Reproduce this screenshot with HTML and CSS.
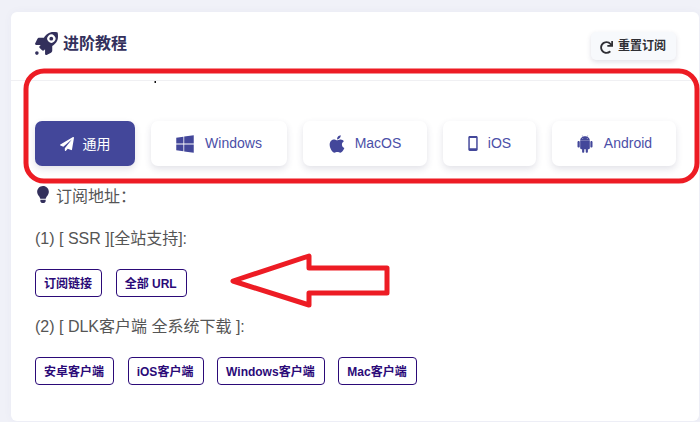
FILE: index.html
```html
<!DOCTYPE html>
<html lang="zh-CN">
<head>
    <meta charset="UTF-8">
    <meta name="viewport" content="width=device-width, initial-scale=1.0">
    <title>进阶教程</title>
    <link rel="stylesheet" href="styles.css">
</head>
<body>
    <div class="card">
        <div class="card-header">
            <h3 class="card-title">
                <svg class="icon-rocket" viewBox="0 0 512 512"><path d="M505.1 19.1c-1.2-5.500-6.700-11-12.200-12.200C460.700 0 435.500 0 410.400 0 307.200 0 245.300 55.200 199.100 128H94.800c-16.300 0-35.600 11.900-42.900 26.500L2.500 253.300A28.400 28.400 0 0 0 0 264a24 24 0 0 0 24 24h103.800l-22.500 22.500c-11.400 11.400-13 32.300 0 45.200l50.900 50.900c11.200 11.200 32.200 13.200 45.300 0l22.500-22.500V488a24 24 0 0 0 24 24 28.600 28.600 0 0 0 10.700-2.500l98.700-49.400c14.600-7.300 26.500-26.500 26.500-42.900V312.800c72.600-46.300 128-108.400 128-211.100 .1-25.200 .1-50.400-6.900-82.600zM300 212a90 90 0 1 1 128-128 90 90 0 0 1-128 128z"/><circle cx="362" cy="148" r="42"/><circle cx="42" cy="470" r="40"/></svg>
                进阶教程
            </h3>
            <button class="reset-btn">
                <svg class="icon-redo" viewBox="0 0 512 512"><path d="M500.33 0h-47.41a12 12 0 0 0-12 12.57l4 82.76A247.42 247.42 0 0 0 256 8C119.34 8 7.9 119.53 8 256.19 8.1 393.07 119.1 504 256 504a247.1 247.1 0 0 0 166.18-63.91 12 12 0 0 0 .48-17.43l-34-34a12 12 0 0 0-16.38-.55A176 176 0 1 1 402.1 157.8l-101.53-4.87a12 12 0 0 0-12.57 12v47.41a12 12 0 0 0 12 12h200.33a12 12 0 0 0 12-12V12a12 12 0 0 0-12-12z"/></svg>
                重置订阅
            </button>
        </div>
        <div class="card-body">
            <div class="tabs">
                <a class="tab active">
                    <svg class="tab-icon" viewBox="0 0 512 512"><path d="M476 3.2L12.5 270.6c-18.1 10.4-15.8 35.6 2.2 43.2L121 358.4l287.3-253.2c5.5-4.9 13.3 2.6 8.6 8.3L176 407v80.5c0 23.6 28.5 32.9 42.5 15.8L282 426l124.6 52.2c14.2 6 30.4-2.9 33-18.2l72-432C515 7.8 493.3-6.8 476 3.2z"/></svg>
                    通用
                </a>
                <a class="tab tab-windows">
                    <svg class="tab-icon icon-windows" viewBox="0 0 448 512"><path d="M0 93.7l183.6-25.3v177.4H0V93.7zm0 324.6l183.6 25.3V268.4H0v149.9zm203.8 28L448 480V268.4H203.8v177.9zm0-380.6v180.1H448V32L203.8 65.7z"/></svg>
                    Windows
                </a>
                <a class="tab tab-mac">
                    <svg class="tab-icon icon-apple" viewBox="0 0 384 512"><path d="M318.7 268.7c-.2-36.7 16.4-64.4 50-84.8-18.8-26.9-47.2-41.7-84.7-44.6-35.5-2.8-74.3 20.7-88.5 20.7-15 0-49.4-19.7-76.4-19.7C63.3 141.2 4 184.8 4 273.5q0 39.3 14.4 81.2c12.8 36.7 59 126.7 107.2 125.2 25.2-.6 43-17.9 75.8-17.9 31.8 0 48.3 17.9 76.4 17.9 48.6-.7 90.4-82.5 102.6-119.3-65.2-30.7-61.7-90-61.7-91.9zm-56.6-164.2c27.3-32.4 24.8-61.9 24-72.5-24.1 1.4-52 16.4-67.9 34.9-17.5 19.8-27.8 44.3-25.6 71.9 26.1 2 49.9-11.4 69.5-34.3z"/></svg>
                    MacOS
                </a>
                <a class="tab tab-ios">
                    <svg class="tab-icon icon-phone" viewBox="0 0 320 512"><path fill-rule="evenodd" d="M48 0h224c26.500 0 48 21.500 48 48v416c0 26.500-21.500 48-48 48H48c-26.500 0-48-21.500-48-48V48C0 21.500 21.500 0 48 0zM50 70v350h220V70z"/></svg>
                    iOS
                </a>
                <a class="tab tab-android">
                    <svg class="tab-icon icon-android" viewBox="0 0 448 512"><path d="M89.600 204.500v115.800c0 15.400-12.100 27.700-27.500 27.700-15.300 0-30.100-12.400-30.100-27.700V204.500c0-15.100 14.800-27.500 30.100-27.500 15.100 0 27.500 12.400 27.500 27.500zm10.800 157c0 16.400 13.200 29.600 29.600 29.600h19.900l.3 61.100c0 36.900 55.200 36.600 55.200 0v-61.100h37.200v61.100c0 36.700 55.500 36.800 55.500 0v-61.100h20.200c16.200 0 29.400-13.200 29.400-29.600V182.100H100.400v179.400zm248-189.100H99.300c0-42.800 25.600-80 63.600-99.400l-19.100-35.300c-2.800-4.900 4.300-8 6.700-3.800l19.400 35.600c34.900-15.500 75-14.700 108.300 0L297.500 34c2.500-4.300 9.500-1.100 6.700 3.800L285.100 73c37.700 19.400 63.300 56.600 63.300 99.400zm-170.700-55.500c0-5.700-4.600-10.500-10.500-10.500-5.700 0-10.200 4.800-10.200 10.500s4.600 10.500 10.200 10.500c5.900 0 10.500-4.800 10.500-10.500zm113.400 0c0-5.700-4.600-10.500-10.200-10.500-5.900 0-10.500 4.800-10.500 10.500s4.600 10.500 10.500 10.500c5.600 0 10.200-4.800 10.200-10.500zM416 204.500v115.800c0 15.400-12.400 27.700-27.500 27.700-15.300 0-27.500-12.400-27.500-27.700V204.500c0-15.100 12.200-27.500 27.500-27.500 15.100 0 27.500 12.400 27.500 27.500z"/></svg>
                    Android
                </a>
            </div>

            <p class="line line-first">
                <svg class="icon-bulb" viewBox="0 0 352 512"><path d="M96.060 454.350c.01 6.290 1.870 12.450 5.360 17.690l17.090 25.690a32 32 0 0 0 26.640 14.280h61.710a32 32 0 0 0 26.640-14.280l17.090-25.690a32 32 0 0 0 5.360-17.690l.04-38.350H96.010l.05 38.350zM0 176c0 44.370 16.450 84.850 43.560 115.780 16.520 18.850 42.360 58.230 52.210 91.450.04.26.07.52.11.78h160.240c.04-.26.07-.51.11-.78 9.850-33.220 35.690-72.600 52.210-91.450C335.550 260.850 352 220.370 352 176 352 78.610 272.910-.3 175.450 0 73.440.31 0 82.970 0 176z"/></svg>
                订阅地址：
            </p>
            <p class="line">(1) [ SSR ][全站支持]:</p>
            <div class="btn-row">
                <a class="outline-btn">订阅链接</a>
                <a class="outline-btn">全部 URL</a>
            </div>
            <p class="line">(2) [ DLK客户端 全系统下载 ]:</p>
            <div class="btn-row">
                <a class="outline-btn">安卓客户端</a>
                <a class="outline-btn">iOS客户端</a>
                <a class="outline-btn">Windows客户端</a>
                <a class="outline-btn">Mac客户端</a>
            </div>
        </div>
    </div>

    <!-- red marks drawn over the screenshot -->
    <svg class="marks" viewBox="0 0 700 422">
        <rect x="26" y="71" width="671" height="110" rx="18" fill="none" stroke="#ed1c24" stroke-width="5"/>
        <path d="M233 281 L309 256 L309 268 L387 268 L387 293 L309 293 L309 305 Z" fill="none" stroke="#ed1c24" stroke-width="5" stroke-linejoin="round"/>
        <rect x="154.500" y="81" width="1.500" height="2" fill="#111"/>
    </svg>
</body>
</html>
```

FILE: styles.css
```css
html, body {
    height: 100%;
}
body {
    margin: 0;
    padding: 12px 1px 1px 11px;
    box-sizing: border-box;
    overflow: hidden;
    position: relative;
    background-color: #f0f1f8;
    font-family: "Liberation Sans", "Noto Sans CJK SC", sans-serif;
}
.card {
    height: 100%;
    background-color: white;
    border-radius: 6px;
    box-shadow: 0 0 10px rgba(80, 80, 140, 0.04);
}
.card-header {
    height: 69px;
    box-sizing: border-box;
    padding: 20px 23px 0 24px;
    display: flex;
    justify-content: space-between;
    border-bottom: 1px solid #f0f0f3;
}
.card-title {
    margin: -3px 0 0;
    height: 26px;
    display: flex;
    align-items: center;
    gap: 5px;
    font-size: 16px;
    font-weight: bold;
    color: #33305c;
}
.icon-rocket {
    width: 23px;
    height: 23px;
    fill: #33305c;
    margin-top: 3px;
}
.reset-btn {
    height: 28px;
    padding: 0 10px 3px 9px;
    display: flex;
    align-items: center;
    gap: 5px;
    border: none;
    border-radius: 5px;
    background-color: #f7f9fc;
    box-shadow: 0 2px 5px rgba(50, 50, 93, 0.15);
    font-family: inherit;
    font-size: 12px;
    font-weight: bold;
    color: #2f2f35;
}
.icon-redo {
    width: 13px;
    height: 13px;
    fill: #2f2f35;
    margin-top: 6px;
}
.card-body {
    padding: 40px 23px 0 24px;
}
.tabs {
    display: flex;
    gap: 16px;
}
.tab {
    height: 45px;
    box-sizing: border-box;
    padding-bottom: 1px;
    display: flex;
    align-items: center;
    justify-content: center;
    gap: 10px;
    border-radius: 7px;
    background-color: white;
    box-shadow: 0 3px 7px rgba(50, 50, 93, 0.14);
    font-size: 14px;
    color: #4b4fa8;
}
.tab.active {
    width: 100px;
    gap: 9px;
    background-color: #43479a;
    color: white;
}
.tab-windows {
    width: 136px;
    gap: 11px;
}
.tab-mac { width: 124px; }
.tab-ios { width: 93px; }
.tab-android { width: 124px; }
.tab-icon {
    fill: #43479a;
    margin-top: 1px;
}
.tab.active .tab-icon {
    fill: white;
    width: 14px;
    height: 14px;
}
.icon-windows {
    width: 18px;
    height: 20px;
}
.icon-apple {
    width: 16px;
    height: 20px;
}
.icon-phone {
    width: 10px;
    height: 15px;
}
.icon-android {
    width: 18px;
    height: 20px;
}
.line {
    margin: 18px 0 0;
    font-size: 16px;
    line-height: 24px;
    color: #555;
}
.line-first {
    margin-top: 19px;
    display: flex;
    align-items: center;
    gap: 7px;
}
.icon-bulb {
    width: 12px;
    height: 17px;
    margin-left: 2px;
    margin-top: -6px;
    fill: #33305c;
}
.btn-row {
    display: flex;
    gap: 13.3px;
    margin-top: 18px;
}
.outline-btn {
    height: 28px;
    box-sizing: border-box;
    padding: 0 9.4px 2px 8px;
    display: flex;
    align-items: center;
    border: 1px solid #2b0a78;
    border-radius: 4px;
    font-size: 12px;
    font-weight: bold;
    color: #2b0a78;
}
.marks {
    position: absolute;
    left: 0;
    top: 0;
    width: 700px;
    height: 422px;
    pointer-events: none;
}
```
